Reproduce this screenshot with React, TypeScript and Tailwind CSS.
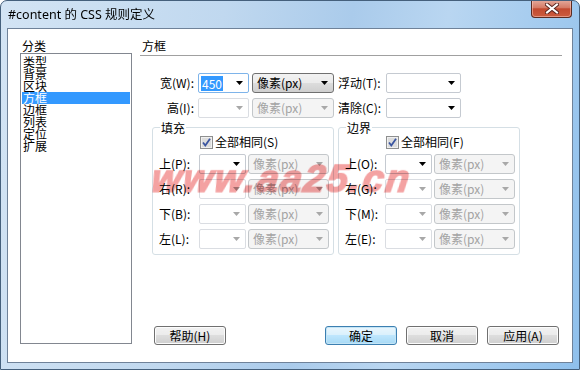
import React from 'react';

const ui = { fontFamily: '"Noto Sans CJK SC", "Liberation Sans", sans-serif' };

function Arrow({ disabled }: { disabled?: boolean }) {
  return (
    <svg width="7" height="4" viewBox="0 0 7 4" className="shrink-0">
      <polygon points="0,0 7,0 3.5,4" fill={disabled ? '#a8a8a8' : '#000'} />
    </svg>
  );
}

// editable combo box (white field + arrow)
function EditCombo({ w, disabled, value, focused }: { w: string; disabled?: boolean; value?: string; focused?: boolean }) {
  return (
    <div
      className={`${w} h-[20px] flex items-center justify-between pl-[2px] pr-[5px] bg-white rounded-[2px] border ${
        focused ? 'border-[#7eb4ea]' : disabled ? 'border-[#dadde2]' : 'border-[#c5cad1]'
      }`}
    >
      {value ? (
        <span className="bg-[#3399ff] text-white text-[12px] leading-[15px] px-[1px]">{value}</span>
      ) : (
        <span />
      )}
      <Arrow disabled={disabled} />
    </div>
  );
}

// drop-down list that looks like a button
function UnitSelect({ w, disabled }: { w: string; disabled?: boolean }) {
  return (
    <div
      className={`${w} h-[20px] flex items-center justify-between pl-[4px] pr-[5px] rounded-[3px] border ${
        disabled
          ? 'border-[#c3c7ca] bg-[#f4f4f4] text-[#a3a3a3]'
          : 'border-[#707070] bg-[linear-gradient(#f2f2f2_0%,#ebebeb_50%,#dddddd_50%,#cfcfcf_100%)] text-black'
      }`}
    >
      <span className="text-[12px] leading-[14px]">像素(px)</span>
      <Arrow disabled={disabled} />
    </div>
  );
}

function Button({ label, primary }: { label: string; primary?: boolean }) {
  return (
    <div
      className={`w-[72px] h-[19px] flex items-center justify-center rounded-[3px] border text-[12px] leading-[14px] ${
        primary
          ? 'border-[#3c7fb1] bg-[linear-gradient(#eaf6fd_0%,#d9f0fc_50%,#bee6fd_50%,#a7d9f5_100%)] shadow-[inset_0_0_0_1px_#c4e5f6]'
          : 'border-[#707070] bg-[linear-gradient(#f2f2f2_0%,#ebebeb_50%,#dddddd_50%,#cfcfcf_100%)] shadow-[inset_0_0_0_1px_#fcfcfc]'
      }`}
    >
      {label}
    </div>
  );
}

function Checkbox() {
  return (
    <svg width="13" height="13" viewBox="0 0 13 13" className="shrink-0">
      <rect x="0.5" y="0.5" width="12" height="12" fill="#f0f0f0" stroke="#8e8f8f" />
      <rect x="2" y="2" width="9" height="9" fill="#dcdcdc" />
      <path d="M3 6.5 L5.3 9.5 L10 2.8" fill="none" stroke="#3a55a0" strokeWidth="1.8" />
    </svg>
  );
}

function GroupBox({ title, check, rows }: { title: string; check: string; rows: string[] }) {
  return (
    <div className="relative w-[182px] h-[128px] border border-[#d5dfe5] rounded-[3px] pt-[7px]">
      <span className="absolute left-[7px] -top-[7px] bg-white px-[1px] text-[12px] leading-[13px]">{title}</span>
      <div className="flex items-center gap-[2px] pl-[47px]">
        <Checkbox />
        <span className="text-[12px] leading-[14px]">{check}</span>
      </div>
      <div className="flex flex-col gap-[5px] mt-[5px]">
        {rows.map((r, i) => (
          <div key={r} className="flex items-center">
            <span className="w-[41px] pl-[6px] text-[12px] leading-[14px] whitespace-nowrap">{r}</span>
            <div className="w-[5px]" />
            <EditCombo w="w-[47px]" disabled={i > 0} />
            <div className="w-[2px]" />
            <UnitSelect w="w-[81px]" disabled />
          </div>
        ))}
      </div>
    </div>
  );
}

export default function App() {
  const categories = ['类型', '背景', '区块', '方框', '边框', '列表', '定位', '扩展'];

  return (
    <div
      className="w-[580px] h-[370px] flex flex-col border border-[#45607c] rounded-t-[7px] overflow-hidden bg-[linear-gradient(100deg,#d3e4f4_0%,#c0d8ef_35%,#aacbeb_55%,#b9d6f1_70%,#8fc0ec_100%)] px-[6px] pb-[6px]"
      style={ui}
    >
      {/* Title bar */}
      <div className="h-[27px] flex items-start justify-between shrink-0">
        <span
          className="pl-[1px] pt-[6px] text-[12.5px] leading-[16px] text-black"
          style={{ fontFamily: '"Noto Sans", "Noto Sans CJK SC", sans-serif' }}
        >
          #content 的 CSS 规则定义
        </span>
        <div className="-mt-[1px] mr-[1px] w-[41px] h-[18px] flex items-center justify-center rounded-b-[4px] border border-t-0 border-[#5a2b22] bg-[linear-gradient(#e4ab9e_0%,#d57b66_45%,#c24a30_52%,#cb5c3f_100%)] shadow-[inset_0_0_0_1px_rgba(255,210,200,0.5)]">
          <svg width="14" height="11" viewBox="0 0 14 11">
            <path d="M2 1.5 L12 9.5 M12 1.5 L2 9.5" stroke="#5a2620" strokeWidth="4" strokeLinecap="square" />
            <path d="M2 1.5 L12 9.5 M12 1.5 L2 9.5" stroke="#ffffff" strokeWidth="2" strokeLinecap="square" />
          </svg>
        </div>
      </div>

      {/* Client area */}
      <div className="relative flex-1 bg-white border border-[#6f8299] flex text-[12px] text-black">
        {/* Category list */}
        <div className="pl-[12px] pt-[10px] flex flex-col">
          <span className="leading-[13px] pl-[2px]">分类</span>
          <div className="mt-[1px] w-[112px] h-[291px] border border-[#828790] pt-[2px] px-[1px]">
            {categories.map((c) => (
              <div
                key={c}
                className={`h-[12px] leading-[12px] pl-[1px] ${c === '方框' ? 'bg-[#3399ff] text-white' : ''}`}
              >
                {c}
              </div>
            ))}
          </div>
        </div>

        {/* Box panel */}
        <div className="ml-[8px] w-[422px] pt-[10px] flex flex-col">
          <div className="pl-[2px] pb-[3px] leading-[13px] border-b border-[#a0a0a0]">方框</div>

          <div className="mt-[17px] flex flex-col gap-[5px]">
            <div className="flex items-center">
              <span className="w-[54px] text-right leading-[14px]">宽(W):</span>
              <div className="w-[4px]" />
              <EditCombo w="w-[51px]" value="450" focused />
              <div className="w-[3px]" />
              <UnitSelect w="w-[82px]" />
              <span className="w-[52px] pl-[4px] leading-[14px] whitespace-nowrap">浮动(T):</span>
              <EditCombo w="w-[75px]" />
            </div>
            <div className="flex items-center">
              <span className="w-[54px] text-right leading-[14px]">高(I):</span>
              <div className="w-[4px]" />
              <EditCombo w="w-[51px]" disabled />
              <div className="w-[3px]" />
              <UnitSelect w="w-[82px]" disabled />
              <span className="w-[52px] pl-[4px] leading-[14px] whitespace-nowrap">清除(C):</span>
              <EditCombo w="w-[75px]" />
            </div>
          </div>

          <div className="mt-[9px] ml-[12px] flex gap-[4px]">
            <GroupBox title="填充" check="全部相同(S)" rows={['上(P):', '右(R):', '下(B):', '左(L):']} />
            <GroupBox title="边界" check="全部相同(F)" rows={['上(O):', '右(G):', '下(M):', '左(E):']} />
          </div>

          <div className="mt-auto mb-[17px] flex items-center pl-[14px] pr-[3px]">
            <Button label="帮助(H)" />
            <div className="flex-1" />
            <div className="flex gap-[9px]">
              <Button label="确定" primary />
              <Button label="取消" />
              <Button label="应用(A)" />
            </div>
          </div>
        </div>

        {/* Watermark */}
        <span
          className="absolute left-[144px] top-[128px] text-[38px] leading-[44px] font-bold italic tracking-[2px] -skew-x-[8deg] text-[#f4a2a2] mix-blend-multiply [-webkit-text-stroke:1.5px_#f4a2a2] pointer-events-none"
          style={{ fontFamily: '"Liberation Sans", sans-serif' }}
        >
          www.aa25.cn
        </span>
      </div>
    </div>
  );
}
